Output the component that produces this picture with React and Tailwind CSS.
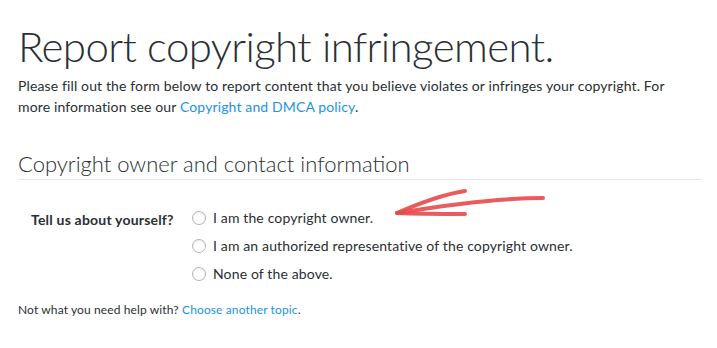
import React, { useState } from 'react';

const options = [
  'I am the copyright owner.',
  'I am an authorized representative of the copyright owner.',
  'None of the above.',
];

const Arrow = () => (
  <svg width="170" height="40" viewBox="0 0 170 40" className="absolute left-[390px] top-[185px]" fill="none">
    <path d="M153 13 C120 13 80 16 7 28" stroke="#e8494b" strokeWidth="4" strokeLinecap="round" opacity="0.9" />
    <path d="M75 6 C55 9 30 18 7 28 C30 29 55 29 75 29" stroke="#e8494b" strokeWidth="4" strokeLinecap="round" strokeLinejoin="round" opacity="0.9" />
  </svg>
);

const App = () => {
  const [choice, setChoice] = useState(null);

  return (
    <div className="relative w-[717px] h-[348px] bg-white text-[#292f33] font-['Lato',sans-serif] overflow-hidden">
      <div className="pl-[18px] pr-[15px] pt-[20px]">
        <h1 className="text-[42px] font-light leading-[52px] tracking-[-0.6px]">Report copyright infringement.</h1>

        <p className="mt-[3px] text-[14px] leading-[21px] tracking-[0.13px]">
          Please fill out the form below to report content that you believe violates or infringes your copyright. For
          <br />
          more information see our <a href="#" className="text-[#1b95e0]">Copyright and DMCA policy</a>.
        </p>

        {/* Section */}
        <h2 className="mt-[33px] pb-[1px] text-[22px] font-light leading-[28px] border-b border-[#e1e8ed]">
          Copyright owner and contact information
        </h2>

        <div className="mt-[28px] flex">
          <div className="w-[174px] pl-[13px] pt-[1px] text-[14px] font-bold tracking-[0.2px]">Tell us about yourself?</div>
          <div className="flex flex-col gap-[8px]">
            {options.map((opt, i) => (
              <label key={opt} className="flex items-center gap-[7px] text-[14px] leading-[20px] tracking-[0.14px] cursor-pointer">
                <span
                  onClick={() => setChoice(i)}
                  className="w-[14px] h-[14px] rounded-full border border-[#b5b5b5] bg-white shadow-[inset_0_1px_1px_rgba(0,0,0,0.08)] flex items-center justify-center"
                >
                  {choice === i && <span className="w-[6px] h-[6px] rounded-full bg-[#1b95e0]" />}
                </span>
                {opt}
              </label>
            ))}
          </div>
        </div>

        <p className="mt-[18px] text-[12px] leading-[16px] tracking-[0.12px]">
          Not what you need help with? <a href="#" className="text-[#1b95e0]">Choose another topic</a>.
        </p>
      </div>
      <Arrow />
    </div>
  );
};

export default App;
